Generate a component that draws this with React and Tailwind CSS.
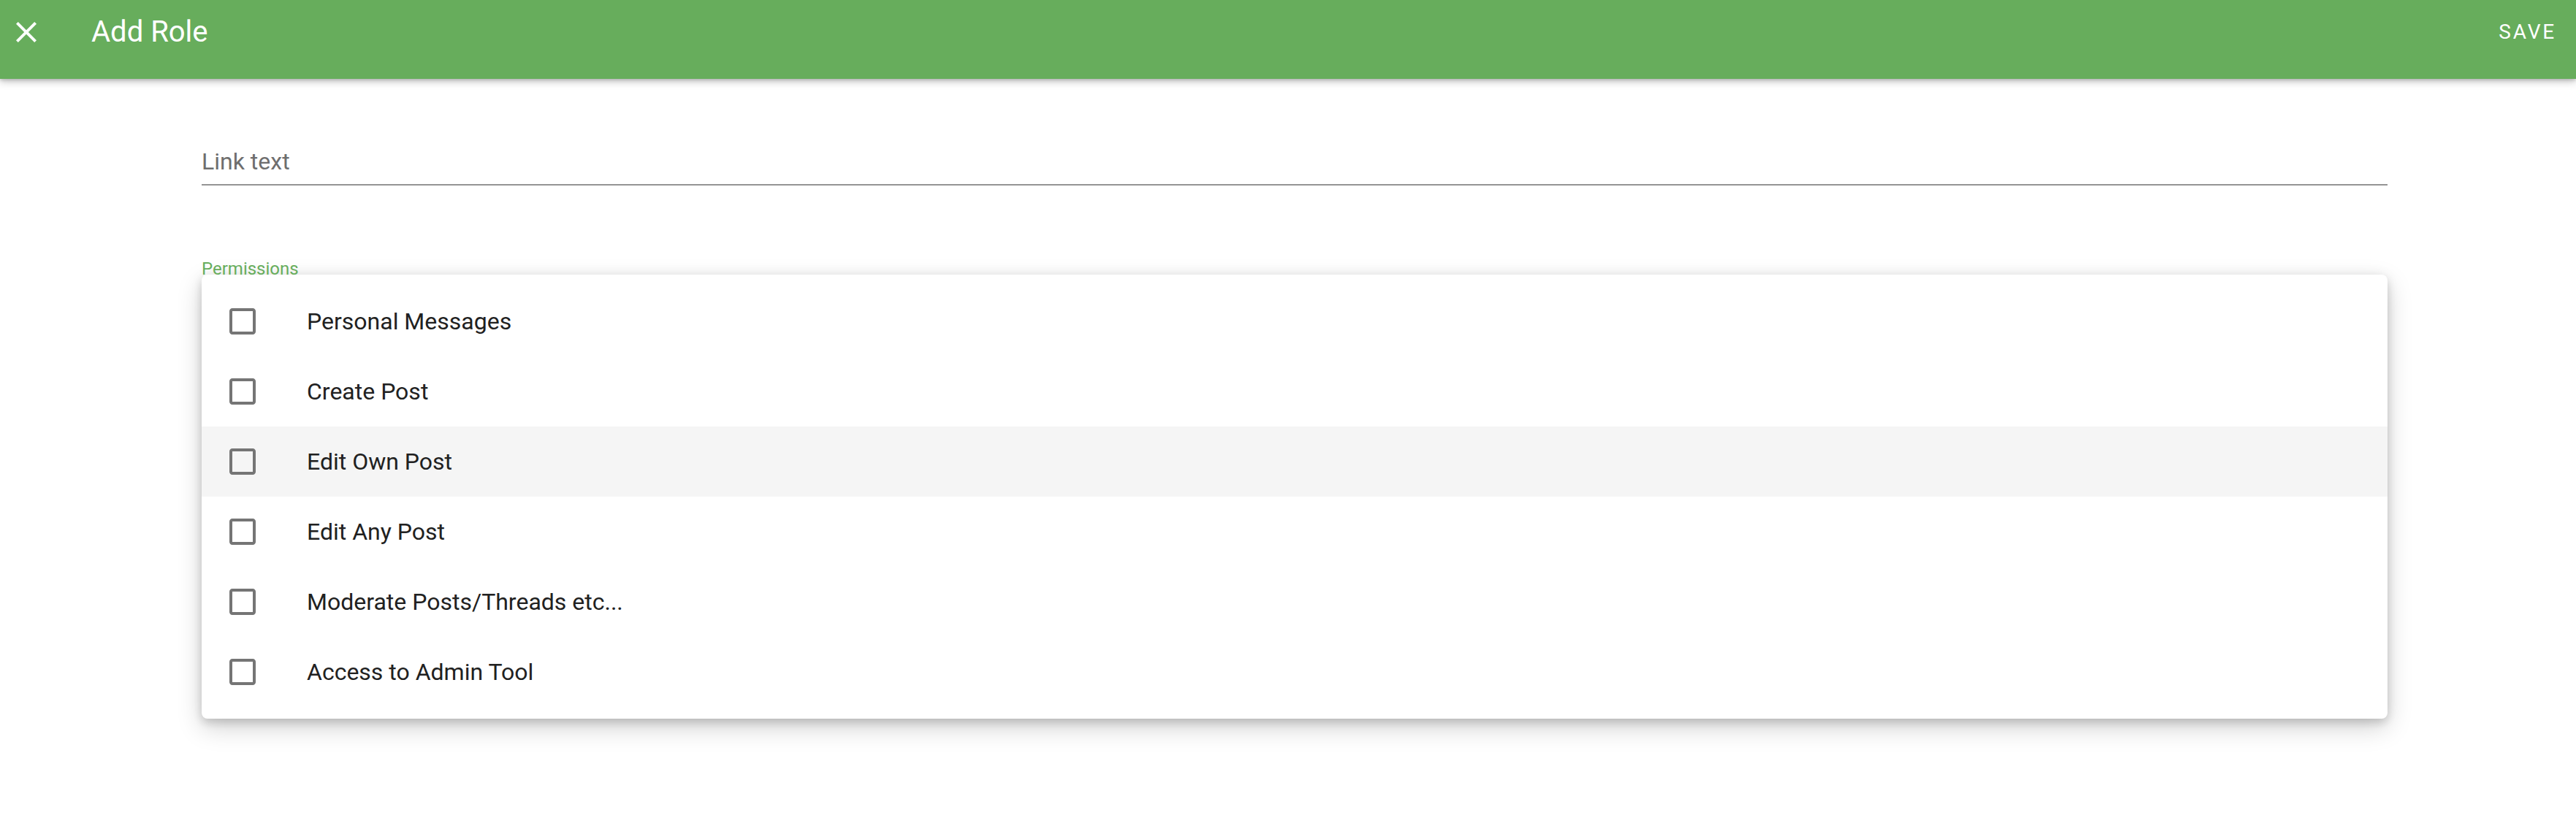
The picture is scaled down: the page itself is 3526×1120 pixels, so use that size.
import React from "react";

const permissions = [
  "Personal Messages",
  "Create Post",
  "Edit Own Post",
  "Edit Any Post",
  "Moderate Posts/Threads etc...",
  "Access to Admin Tool",
];

const CloseIcon = () => (
  <svg viewBox="0 0 24 24" className="w-12 h-12" fill="#ffffff">
    <path d="M19 6.41 17.59 5 12 10.59 6.41 5 5 6.41 10.59 12 5 17.59 6.41 19 12 13.41 17.59 19 19 17.59 13.41 12z" />
  </svg>
);

const BoxIcon = () => (
  <svg viewBox="0 0 24 24" className="w-12 h-12" fill="#757575">
    <path d="M19 5v14H5V5h14m0-2H5c-1.1 0-2 .9-2 2v14c0 1.1.9 2 2 2h14c1.1 0 2-.9 2-2V5c0-1.1-.9-2-2-2z" />
  </svg>
);

const App = () => {
  return (
    <div className="min-h-[1120px] bg-white font-['Roboto','Liberation_Sans',sans-serif]">
      <header className="h-[108px] bg-[#67ad5c] shadow-[0_4px_10px_rgba(0,0,0,0.22),0_2px_4px_rgba(0,0,0,0.14)] relative z-10">
        <div className="h-[87px] flex items-center pl-3 pr-[27px]">
          <CloseIcon />
          <h1 className="ml-[65px] text-[40px] leading-none text-white font-normal">Add Role</h1>
          <button className="ml-auto text-[28px] leading-none text-white font-normal tracking-[0.1em]">
            SAVE
          </button>
        </div>
      </header>

      <main className="pl-[276px] pr-[258px]">
        <div className="mt-[97px] pb-[15px] border-b-2 border-[#949494]">
          <div className="text-[32px] leading-[32px] text-[#6e6e6e]">Link text</div>
        </div>

        <div className="mt-[102px] h-[20px] text-[24px] leading-[24px] text-[#67ad5c]">Permissions</div>

        <div className="bg-white rounded-lg py-4 shadow-[0_12px_34px_rgba(0,0,0,0.18),0_6px_12px_rgba(0,0,0,0.12),0_0_18px_rgba(0,0,0,0.06)]">
          {permissions.map((label, i) => (
            <div
              key={label}
              className={`h-24 flex items-center px-8 ${i === 2 ? "bg-[#f5f5f5]" : ""}`}
            >
              <div className="w-[112px] flex items-center">
                <BoxIcon />
              </div>
              <span className="text-[32px] leading-none text-[#212121]">{label}</span>
            </div>
          ))}
        </div>
      </main>
    </div>
  );
};

export default App;
